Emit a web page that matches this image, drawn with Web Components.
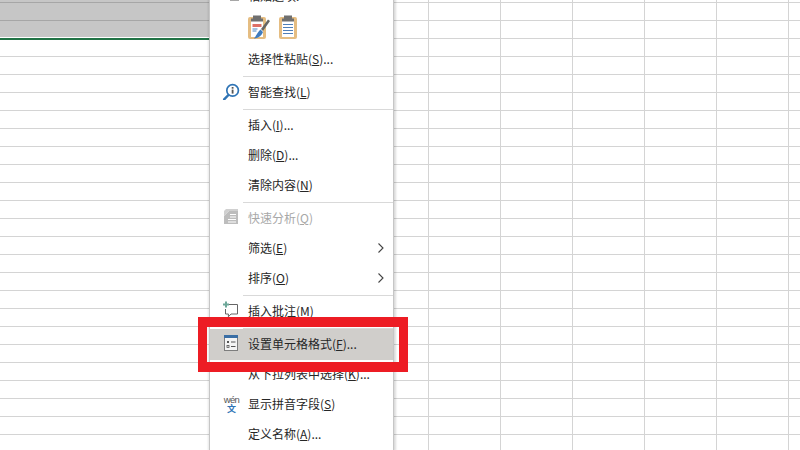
<!DOCTYPE html>
<html lang="zh"><head><meta charset="utf-8"><style>
html,body{margin:0;padding:0;width:800px;height:450px;overflow:hidden;background:#fff}
body{font-family:"Noto Sans CJK SC","Noto Sans",sans-serif}
</style></head><body>
<x-sheet>
  <x-band></x-band>
  <x-context-menu>
    <x-menu-item first label="粘贴选项:"><svg slot="icon" width="18" height="18" viewBox="0 0 18 18"><rect x="8" y="12" width="9" height="1.600" fill="#6d6d6d"/></svg></x-menu-item>
    <x-paste-row></x-paste-row>
    <x-menu-item label="选择性粘贴" key="S" tail="..."></x-menu-item>
    <x-menu-sep></x-menu-sep>
    <x-menu-item label="智能查找" key="L"><svg slot="icon" width="18" height="18" viewBox="0 0 18 18"><path d="M2.200 17.300 6.400 13" stroke="#2f74b5" stroke-width="2.500" stroke-linecap="round"/><circle cx="10.600" cy="8.400" r="5.800" fill="#fff" stroke="#2f74b5" stroke-width="1.700"/><rect x="9.700" y="7.600" width="1.800" height="4" fill="#555"/><rect x="9.700" y="5" width="1.800" height="1.700" fill="#555"/></svg></x-menu-item>
    <x-menu-sep></x-menu-sep>
    <x-menu-item label="插入" key="I" tail="..."></x-menu-item>
    <x-menu-item label="删除" key="D" tail="..."></x-menu-item>
    <x-menu-item label="清除内容" key="N"></x-menu-item>
    <x-menu-sep></x-menu-sep>
    <x-menu-item disabled label="快速分析" key="Q"><svg slot="icon" width="18" height="18" viewBox="0 0 18 18"><path d="M7 3h9v13H2V8z" fill="#bdbdbd"/><path d="M4 1h12v2H7L2 8V3z" fill="#d0d0d0"/><path d="M8 6.500h6M8 9h6M6 11.500h8M6 14h8" stroke="#fff" stroke-width="1.100"/></svg></x-menu-item>
    <x-menu-item label="筛选" key="E" arrow></x-menu-item>
    <x-menu-item label="排序" key="O" arrow></x-menu-item>
    <x-menu-sep></x-menu-sep>
    <x-menu-item label="插入批注" key="M"><svg slot="icon" width="18" height="18" viewBox="0 0 18 18"><path d="M7 3.500h8.500v9.500H9l-2.600 2.800V13H3.500V8" fill="none" stroke="#666" stroke-width="1"/><path d="M4 .5v6M1 3.500h6" stroke="#6ea89a" stroke-width="2"/></svg></x-menu-item>
    <x-menu-sep></x-menu-sep>
    <x-menu-item active label="设置单元格格式" key="F" tail="..."><svg slot="icon" width="18" height="18" viewBox="0 0 18 18"><rect x="2.500" y="1.500" width="13" height="15" fill="#f4f4f4" stroke="#7d7d7d"/><rect x="2" y="1" width="14" height="3" fill="#3a6ea5"/><path d="M9 8h4.500M9 12.500h4.500" stroke="#555" stroke-width="1.200"/><rect x="5" y="7" width="2" height="2" fill="#555"/><rect x="5" y="11.500" width="2" height="2" fill="none" stroke="#555" stroke-width=".8"/></svg></x-menu-item>
    <x-menu-item label="从下拉列表中选择" key="K" tail="..."></x-menu-item>
    <x-menu-item label="显示拼音字段" key="S"><x-wen slot="icon"></x-wen></x-menu-item>
    <x-menu-item label="定义名称" key="A" tail="..."></x-menu-item>
  </x-context-menu>
  <x-callout></x-callout>
</x-sheet>
<script>
function def(name, css, html){
  customElements.define(name, class extends HTMLElement{
    connectedCallback(){
      if(this.shadowRoot) return;
      const r=this.attachShadow({mode:"open"});
      r.innerHTML=`<style>${css}</style>`+(typeof html==="function"?html(this):html);
    }
  });
}
def("x-sheet",`:host{display:block;position:relative;width:800px;height:450px;overflow:hidden;
  background-color:#fff;
  background-image:linear-gradient(#d4d4d4 1px,transparent 1px),linear-gradient(90deg,#d4d4d4 1px,transparent 1px);
  background-size:100% 18px,72px 100%;background-position:0 2px,68px 0}
  .fill{position:absolute;left:0;top:38px;width:212px;height:412px;
  background-image:linear-gradient(#d4d4d4 1px,transparent 1px);background-size:100% 18px;background-position:0 0;background-color:#fff}`,
  `<div class="fill"></div><slot></slot>`);
def("x-band",`:host{display:block;position:relative;width:212px;height:40px;box-sizing:border-box;
  background-color:#c6c6c6;
  background-image:linear-gradient(#a6a6a6 1px,transparent 1px);background-size:100% 18px;background-position:0 2px;
  border-bottom:2px solid #217346}`,
  `<div style="position:absolute;left:0;right:0;bottom:0;height:1px;background:#fff"></div>`);
def("x-context-menu",`:host{position:absolute;left:209px;top:-18px;width:183px;background:#fff;
  border:1px solid #c6c6c6;box-shadow:2px 0 2px rgba(0,0,0,.14),-1px 0 2px rgba(0,0,0,.1);
  display:flex;flex-direction:column}`,`<slot></slot>`);
def("x-menu-item",`:host{display:grid;grid-template-columns:38px 1fr 14px;align-items:center;height:30px;
  font-size:12px;line-height:16px;color:#262626;position:relative}
  :host([active]){background:#d0cecb;box-shadow:0 -1px 0 #d0cecb}
  :host([disabled]){color:#a8a8a8}
  .i{display:block;padding-left:12px;box-sizing:border-box;width:38px;margin-top:-1px}
  .t{white-space:nowrap;margin-top:-2px}
  :host([first]) .t{margin-top:-4px}
  u{text-underline-offset:1px}
  svg{display:block}
  .a{justify-self:start;margin-top:-3px;margin-left:-2px}`,
  e=>`<span class="i"><slot name="icon"></slot></span>
  <span class="t">${e.getAttribute("label")}${e.hasAttribute("key")?`(<u>${e.getAttribute("key")}</u>)`:""}${e.getAttribute("tail")||""}</span>
  ${e.hasAttribute("arrow")?`<svg class="a" width="8" height="12" viewBox="0 0 8 12"><path d="M1.500 1.500 6 6 1.500 10.500" fill="none" stroke="#444" stroke-width="1.100"/></svg>`:"<span></span>"}`);
def("x-menu-sep",`:host{display:block;height:1px;margin:1px 0 1px 33px;background:#d9d9d9}`,``);
def("x-paste-row",`:host{display:flex;gap:9px;height:32px;padding-left:38px;align-items:flex-start;padding-top:2px;box-sizing:border-box}svg{display:block}`,
  `<svg width="22" height="24" viewBox="0 0 22 24"><rect x="0" y="2" width="18" height="22" rx="2" fill="#e5bd82"/><rect x="3" y="5" width="12" height="17" fill="#fff"/><path d="M5 0.500h8v3h2v3H3v-3h2z" fill="#6f6f6f"/><path d="M4.500 9h9v3h-9z" fill="#d8574c" opacity=".85"/><path d="M4.500 14h5M4.500 16h4" stroke="#4f86c0"/><path d="M13 14 20 4.500 22 6 15 16z" fill="#666"/><path d="M12.500 14.500 15 17c-1 3-4 6-9 6.500 2-2 3-6 6.500-9z" fill="#3f7cbf"/></svg>
  <svg width="18" height="24" viewBox="0 0 18 24"><rect x="0" y="2" width="18" height="22" rx="2" fill="#e5bd82"/><rect x="3" y="5" width="12" height="17" fill="#fff"/><path d="M5 0.500h8v3h2v3H3v-3h2z" fill="#6f6f6f"/><path d="M4 9.500h10M4 12.500h10M4 15.500h10M4 18.500h10" stroke="#4f7fb8"/></svg>`);
def("x-wen",`:host{display:flex;flex-direction:column;align-items:center;width:19px;margin-top:-1px;font-family:"Liberation Sans","Noto Sans",sans-serif}
  .w{font-size:9.500px;letter-spacing:-.6px;color:#555;height:8px;line-height:8px;display:block}
  .z{font-size:9px;color:#2f74b5;height:9px;line-height:9px;font-weight:700;font-family:"Noto Sans CJK SC",sans-serif;display:block}`,
  `<span class="w">wén</span><span class="z">文</span>`);
def("x-callout",`:host{position:absolute;left:198px;top:317px;width:210px;height:55px;box-sizing:border-box;
  border:solid #ed1c24;border-width:10px 9px 10px 9px;pointer-events:none}`,``);
</script>
</body></html>
